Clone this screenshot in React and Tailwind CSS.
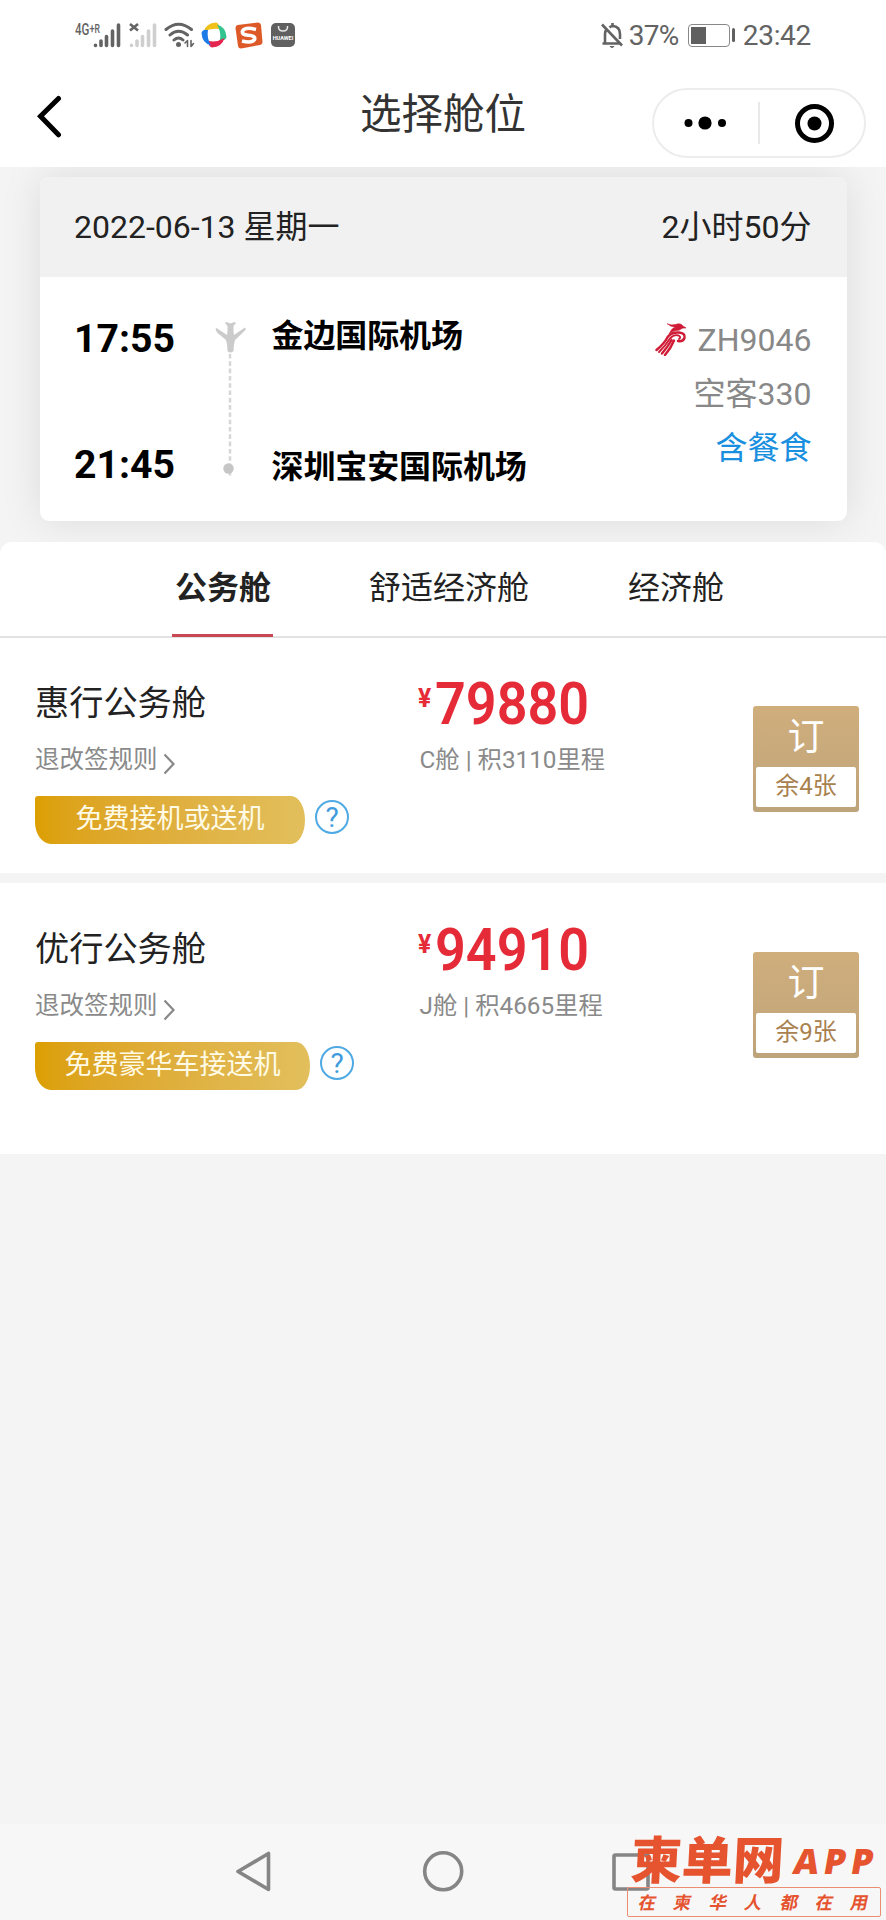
const cabins = [
  { name: '惠行公务舱', price: '79880', detail: 'C舱 | 积3110里程', perk: '免费接机或送机', left: '余4张' },
  { name: '优行公务舱', price: '94910', detail: 'J舱 | 积4665里程', perk: '免费豪华车接送机', left: '余9张' },
];

function Signal({ className }) {
  return (
    <svg viewBox="0 0 28 26" className={className} fill="none" stroke="currentColor" strokeWidth="3.6" strokeLinecap="round">
      <path d="M2.5 23.2v.3M8 19v4.5M13.5 14.5v9M19.5 9v14.5M25.5 3v20.5" />
    </svg>
  );
}

function StatusBar() {
  return (
    <div className="h-[70px] flex items-center justify-between pl-[75px] pr-[75px] text-[#636363]">
      <div className="flex items-center h-[26px]">
        <span className="w-[18px] h-[26px] whitespace-nowrap text-[16px] leading-[14px] font-medium origin-left scale-x-[0.720]">
          4G<span className="text-[13px] align-[2px]">+</span><span className="text-[12px] align-[2px]">R</span>
        </span>
        <Signal className="w-7 h-[26px]" />
        <div className="relative ml-2 w-7 h-[26px]">
          <Signal className="w-7 h-[26px] text-[#cfcfcf]" />
          <svg viewBox="0 0 10 10" className="absolute left-0 top-0 w-[10px] h-[10px]" stroke="currentColor" strokeWidth="2.6">
            <path d="M1 2l8 6.500M9 2L1 8.500" />
          </svg>
        </div>
        <svg viewBox="0 0 31 26" className="ml-[7px] w-[31px] h-[26px]" fill="none" stroke="currentColor" strokeWidth="3" strokeLinecap="round">
          <path d="M2 7.500Q14.500-3 27.500 7.500M6 13Q14.500 5.500 23.500 13M10 18Q14.500 14 19 18" />
          <circle cx="14.500" cy="22.500" r="2.500" fill="currentColor" stroke="none" />
          <path d="M23.500 18.500v6M23 19l-2 2M27 18.500v6M27.500 24l2-2.500" strokeWidth="1.600" />
        </svg>
        <svg viewBox="0 0 26 26" className="ml-[6px] w-[26px] h-[26px]">
          <path d="M2.500 10Q5 1 15 .5q4 1 3 6.500Q10 5.500 2.500 10z" fill="#f2c118" />
          <path d="M16 2.500Q25 5 25.500 15q-1 4-6.500 3Q20.500 10 16 2.500z" fill="#31c48d" />
          <path d="M23.500 16Q21 25 11 25.500q-4-1-3-6.500Q16 20.500 23.500 16z" fill="#e6254f" />
          <path d="M10 23.500Q1 21 .5 11q1-4 6.500-3Q5.500 16 10 23.500z" fill="#1d7be8" />
        </svg>
        <svg viewBox="0 0 28 28" className="ml-[8px] w-7 h-7">
          <path d="M2.500 4L23 1.500q2.500 0 3 2.500l1.500 17q0 2.500-2.500 3L6 27.500q-2.500 0-3-2.500L.5 7q0-2.500 2-3z" fill="#dd5a28" />
          <path d="M21 8.500Q10 5.500 7.500 10q-1 4 5.500 4.200 8 .3 6.500 4.300Q17 22.500 7 20" fill="none" stroke="#fff" strokeWidth="3.600" />
        </svg>
        <div className="ml-[8px] w-6 h-6 rounded-[5px] bg-[#606060] flex flex-col items-center">
          <svg viewBox="0 0 12 9" className="w-3 h-[9px] mt-[3px]" fill="none" stroke="#e5e5e5" strokeWidth="1.500">
            <path d="M1.500 0v1q0 4 4.500 4t4.500-4V0" />
          </svg>
          <span className="text-[5.500px] leading-[6px] font-bold text-white">HUAWEI</span>
        </div>
      </div>
      <div className="flex items-center text-[28px] leading-none">
        <svg viewBox="0 0 25 27" className="w-[25px] h-[27px] mr-[4px]" fill="none" stroke="currentColor" strokeWidth="2.600">
          <path d="M2 2.500l20 21M2.500 21.500H20M5 21.500V12q0-3 2-5M9.500 5.500Q11 4 12.500 4q7.500.5 7.500 8v5M12.500 1v3" />
          <path d="M9.500 24h5q-2.500 4-5 0z" fill="currentColor" stroke="none" />
        </svg>
        <span className="w-[59px] pt-px tracking-[-0.800px]">37%</span>
        <div className="w-[42px] h-[23px] rounded-[4px] border-[1.500px] border-[#888] p-[2px]">
          <div className="w-[15px] h-full bg-[#606060]" />
        </div>
        <div className="ml-[2px] mr-[8px] w-[3px] h-[14px] rounded-sm bg-[#606060]" />
        <span className="pt-px tracking-[-0.300px]">23:42</span>
      </div>
    </div>
  );
}

function Header() {
  return (
    <header className="h-[97px] relative flex items-center justify-between pl-9 pr-5">
      <svg viewBox="0 0 28 44" className="w-7 h-11 mb-[5px]" fill="none" stroke="#000" strokeWidth="5" strokeLinecap="round" strokeLinejoin="miter">
        <path d="M22.500 4.500L4.500 22.300l18 18.500" />
      </svg>
      <h1 className="absolute inset-x-0 top-[22px] text-center text-[41.500px] leading-[46px] text-[#333]">选择舱位</h1>
      <div className="w-[214px] h-[70px] mt-[9px] rounded-full border-2 border-[#ececec] flex items-center relative">
        <svg viewBox="0 0 210 66" className="w-full h-full">
          <circle cx="34.500" cy="33" r="4" />
          <circle cx="51" cy="33" r="6.600" />
          <circle cx="68" cy="33" r="4" />
          <path d="M105 12v42" stroke="#e2e2e2" strokeWidth="1.500" />
          <circle cx="160.500" cy="33.500" r="17" fill="none" stroke="#000" strokeWidth="5" />
          <circle cx="160.500" cy="33.500" r="7" />
        </svg>
      </div>
    </header>
  );
}

function AirlineLogo() {
  return (
    <svg viewBox="0 0 34 34" className="w-[34px] h-[34px] -mt-[2px]" fill="none" stroke="#cf1b35" strokeLinecap="round">
      <path d="M13.500 2q4 1.500 8 .5 5-2 7.500 1.500l3 2q-3.500-.5-5 1-1.500 1.500-5 1.500-4 .5-7 3.500 2.500-6 6.500-7-4 .5-8-3z" fill="#cf1b35" strokeWidth=".6" />
      <path d="M2.500 28Q10 22 14 14.500 18 10 25 10.500q6.500.5 5.500 5.500-1.500 4-6.500 3" strokeWidth="2.500" />
      <path d="M5 30Q12 23 16 16.500q4-4.500 8.500-3 3 1.500.5 3.500" strokeWidth="1.900" />
      <path d="M8 31.500Q14 24.500 17.500 18M11 33Q17 26 20 18.500" strokeWidth="2.400" />
    </svg>
  );
}

function FlightCard() {
  return (
    <section className="h-[376px] bg-[#f4f4f4] px-[39.500px] pt-[10px] overflow-hidden">
      <div className="h-[344px] rounded-[9px] bg-white overflow-hidden shadow-[0_0_42px_rgba(0,0,0,0.100)]">
        <div className="h-[100px] bg-[#f1f1f1] flex items-center justify-between pl-[34.500px] pr-[35px] text-[32px] text-[#222]">
          <span>2022-06-13 星期一</span>
          <span>2小时50分</span>
        </div>
        <div className="h-[244px] flex pl-[34.500px] pr-[35px] text-black">
          <div className="w-[139px] pt-[42px] text-[39.200px] leading-[40px] font-bold">
            <div>17:55</div>
            <div className="mt-[86px]">21:45</div>
          </div>
          <svg viewBox="0 0 34 160" className="w-[34px] h-[160px] mt-[44px]">
            <path d="M13.500 1l4 1.500L21.500 1l1.500 1-2.500 3v5.500l.5 3.500L32 6.500l1 1.500-2 2.500-9 8.500-1 4-.5 7q-3 3-6 0l-.5-7-1-4L4 11.500 2.500 8l1-1L14 14l.5-3.500V5L12 2z" fill="#cbcbcb" />
            <path d="M17 33v123" stroke="#d6d6d6" strokeWidth="2.500" strokeDasharray="4.600 2.700" />
            <circle cx="15.500" cy="147.500" r="5.200" fill="#c6c6c6" />
          </svg>
          <div className="ml-[24.500px] pt-[36px] text-[32px] leading-[46px] font-bold tracking-[-0.100px]">
            <div>金边国际机场</div>
            <div className="mt-[84.500px]">深圳宝安国际机场</div>
          </div>
          <div className="ml-auto pt-[36px] text-[32px] leading-[54px] text-[#888] text-right">
            <div className="flex items-center justify-end gap-[10px]"><AirlineLogo />ZH9046</div>
            <div>空客330</div>
            <div className="text-[#198fe0]">含餐食</div>
          </div>
        </div>
      </div>
    </section>
  );
}

function Tabs() {
  return (
    <nav className="h-[96px] -mt-px relative rounded-t-[12px] bg-white border-b-2 border-[#e2e2e2] flex gap-[75px] pl-[172px] text-[32px] leading-[48px] text-[#222]">
      <div className="h-[95px] w-[101px] pt-[22px] pl-px text-center font-bold border-b-[3px] border-[#c94653]">公务舱</div>
      <div className="w-[205px] pt-[22px] pl-[21px]">舒适经济舱</div>
      <div className="pt-[22px]">经济舱</div>
    </nav>
  );
}

function CabinRow({ cabin, className }) {
  return (
    <div className={`flex bg-white pl-[35px] ${className}`}>
      <div className="w-[383px] pt-[40px]">
        <div className="text-[34.200px] leading-[50px] text-[#222]">{cabin.name}</div>
        <div className="mt-[14px] flex items-center h-9 text-[24.500px] text-[#8a8a8a]">
          {/* rules link */}
          <span>退改签规则</span>
          <svg viewBox="0 0 12 22" className="ml-[5px] mt-[8px] w-3 h-[22px]" fill="none" stroke="#888" strokeWidth="2.200">
            <path d="M1.500 1.500L10.500 11l-9 9.500" />
          </svg>
        </div>
        <div className="mt-[18px] flex items-center gap-[10px]">
          <div className={`h-[47.500px] rounded-[3px_14px_14px_16px/3px_24px_24px_22px] bg-linear-to-r from-[#dc9f00] to-[#e2bf5c] text-center text-[27px] leading-[46px] text-[#fffbe6] ${cabin.perk.length > 7 ? 'w-[275px]' : 'w-[270px]'}`}>
            {cabin.perk}
          </div>
          <div className="-mt-[5px] w-[34px] h-[34px] rounded-full border-2 border-[#4fa9e3] text-center text-[28px] leading-[31px] text-[#3f9bdc]">?</div>
        </div>
      </div>
      <div className="w-[335px] pt-[34px] text-[#e52b38]">
        <div className="flex h-[63px]">
          <span className="w-[17px] pt-[8px] text-[26px] leading-[36px] font-bold origin-left scale-x-[0.950]">¥</span>
          <span className="text-[59px] leading-[63px] font-semibold origin-left scale-x-[0.915]">{cabin.price}</span>
        </div>
        <div className="mt-[7px] pl-[1.500px] text-[24.300px] leading-9 text-[#8a8a8a] whitespace-pre">{cabin.detail}</div>
      </div>
      <button className="mt-[68px] w-[106px] h-[105.500px] rounded-[3px] bg-linear-to-b from-[#d0ae7c] to-[#bea47b] px-[3px] flex flex-col text-center">
        <span className="w-full h-[61px] text-[37px] leading-[63px] text-white">订</span>
        <span className="w-full h-[39.500px] rounded-[2px] bg-white text-[24px] leading-[38px] text-[#a9814f]">{cabin.left}</span>
      </button>
    </div>
  );
}

function NavBar() {
  return (
    <div className="h-24 bg-[#f7f7f7] relative">
      <svg viewBox="0 0 886 96" className="w-full h-full" fill="none" stroke="#858585" strokeWidth="3.600" strokeLinejoin="round">
        <path d="M238 47.500L268.500 29.500v36z" />
        <circle cx="443.200" cy="47.300" r="18.500" />
        <rect x="614" y="31" width="34" height="34" rx="1.500" />
      </svg>
      <div className="absolute left-[627px] top-[8px] w-[254px] text-[#e5532f]">
        <div className="h-[55px] flex items-center whitespace-nowrap font-black pl-[4px]">
          <span className="mt-[3px] text-[51px] leading-[55px] -skew-x-3">柬单网</span>
          <span className="ml-[10px] mt-[2px] font-['Open_Sans'] text-[35px] leading-[50px] font-extrabold tracking-[5px] -skew-x-10">APP</span>
        </div>
        <div className="h-[30px] rounded-[2px] border border-[#ec8d73] flex justify-between px-[11px] text-[17.500px] leading-[30px] font-bold">
          {[...'在柬华人都在用'].map((ch, i) => (
            <span key={i} className="-skew-x-12">{ch}</span>
          ))}
        </div>
      </div>
    </div>
  );
}

export default function App() {
  return (
    <div className="w-[886px] h-[1920px] flex flex-col overflow-hidden bg-[#f4f4f4] font-['Roboto','Noto_Sans_CJK_SC',sans-serif]">
      <div className="bg-white">
        <StatusBar />
        <Header />
      </div>
      <FlightCard />
      <Tabs />
      <CabinRow cabin={cabins[0]} className="h-[235px]" />
      <CabinRow cabin={cabins[1]} className="mt-[10px] h-[271px] pt-px" />
      <div className="flex-1" />
      <NavBar />
    </div>
  );
}
